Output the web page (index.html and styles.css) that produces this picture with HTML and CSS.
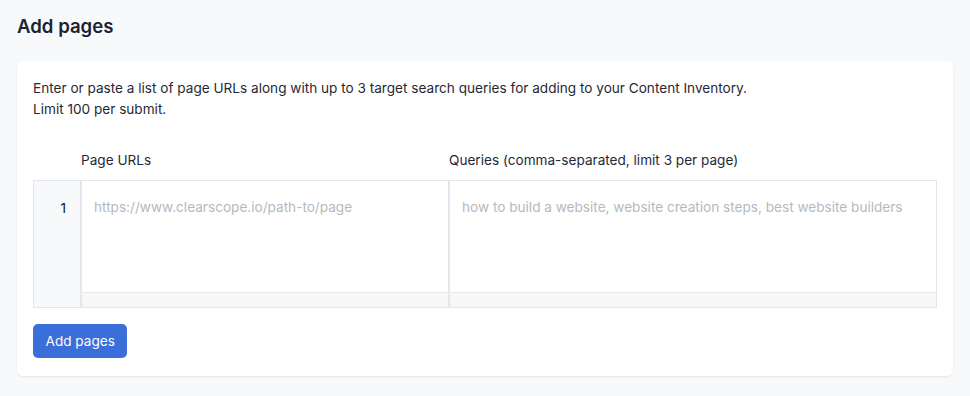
FILE: index.html
```html
<!DOCTYPE html>
<html lang="en">
<head>
  <meta charset="UTF-8">
  <meta name="viewport" content="width=device-width, initial-scale=1.0">
  <title>Add pages</title>
  <link rel="stylesheet" href="styles.css">
</head>
<body>
  <main>
    <h1 class="page-title">Add pages</h1>
    <section class="card">
      <p class="intro">
        Enter or paste a list of page URLs along with up to 3 target search queries for adding to your Content Inventory.<br>
        Limit 100 per submit.
      </p>
      <div class="sheet">
        <div class="sheet-head">
          <div class="gutter-head"></div>
          <div class="col-head">Page URLs</div>
          <div class="col-head">Queries (comma-separated, limit 3 per page)</div>
        </div>
        <div class="sheet-body">
          <div class="gutter">1</div>
          <div class="cell">
            <div class="cell-text placeholder">https://www.clearscope.io/path-to/page</div>
            <div class="scroll-track"></div>
          </div>
          <div class="cell">
            <div class="cell-text placeholder">how to build a website, website creation steps, best website builders</div>
            <div class="scroll-track"></div>
          </div>
        </div>
      </div>
      <button type="button" class="btn-primary">Add pages</button>
    </section>
  </main>
</body>
</html>
```

FILE: styles.css
```css
body {
  margin: 0;
  background-color: #f8f9fb;
  font-family: Inter, "Noto Sans", sans-serif;
  color: #1f2937;
}

main {
  padding: 14px 17px 20px;
}

.page-title {
  margin: 0 0 23px;
  font-size: 18.6px;
  font-weight: 600;
  line-height: 24px;
  color: #1a2332;
}

.card {
  background-color: #fff;
  border-radius: 6px;
  box-shadow: 0 1px 2px rgba(0, 0, 0, 0.08);
  padding: 17px 16px 18px;
}

.intro {
  margin: 0;
  font-size: 13.6px;
  line-height: 21px;
  color: #1f2937;
}

.sheet {
  margin-top: 31px;
}

.sheet-head {
  display: grid;
  grid-template-columns: 48px 368px 1fr;
  font-size: 13.6px;
  line-height: 18px;
  padding-bottom: 11px;
}

.sheet-body {
  display: grid;
  grid-template-columns: 48px 368px 1fr;
  border: 1px solid #e3e6eb;
  height: 126px;
}

.gutter {
  background-color: #f8f9fb;
  border-right: 2px solid #e3e6eb;
  text-align: right;
  padding: 18px 14px 0 0;
  font-size: 13.6px;
  line-height: 18px;
  color: #111827;
}

.cell {
  display: flex;
  flex-direction: column;
  border-right: 2px solid #e3e6eb;
}

.cell:last-child {
  border-right: none;
}

.cell-text {
  flex: 1;
  padding: 17px 12px 0;
  font-size: 13.6px;
  line-height: 18px;
}

.placeholder {
  color: #b4b9c1;
}

.scroll-track {
  height: 14px;
  background-color: #f7f7f8;
  border-top: 1px solid #e6e8ec;
}

.btn-primary {
  margin-top: 16px;
  background-color: #3a6ed8;
  color: #fff;
  border: none;
  border-radius: 5px;
  padding: 0 12.5px;
  height: 34px;
  font-family: Inter, "Noto Sans", sans-serif;
  font-size: 13.6px;
  cursor: pointer;
}
```
